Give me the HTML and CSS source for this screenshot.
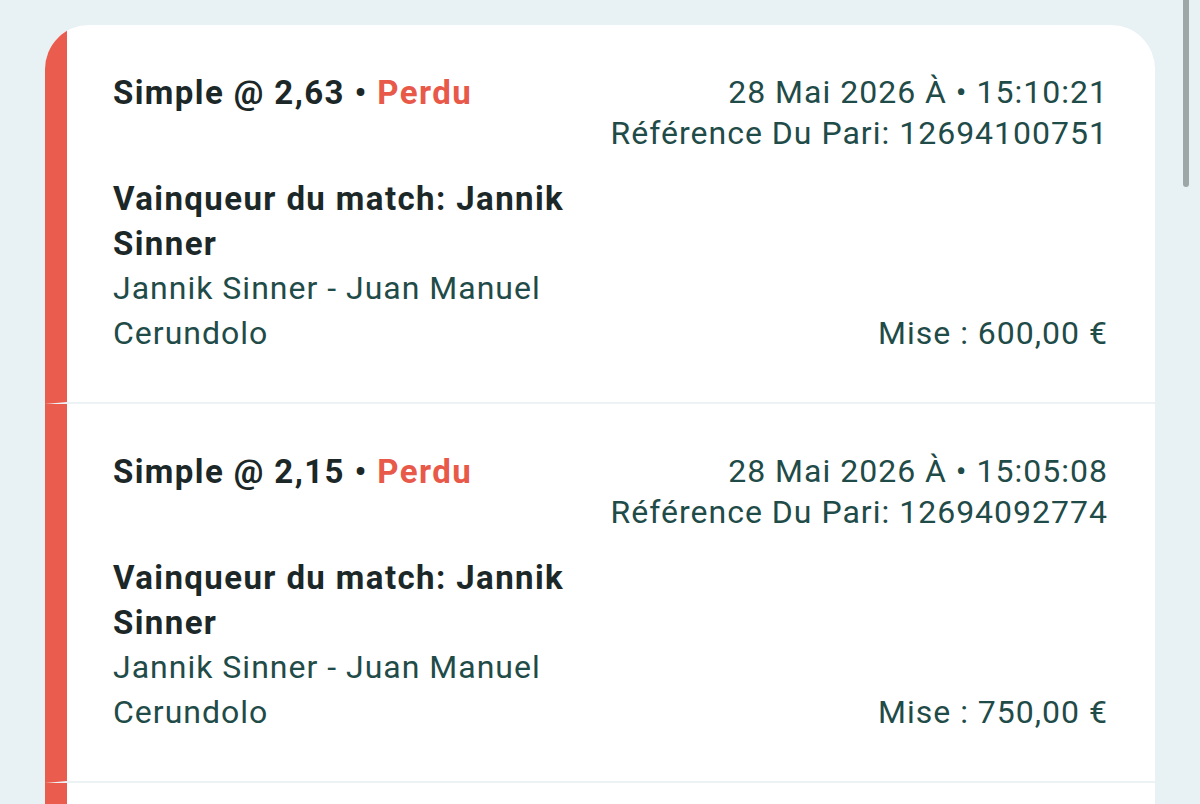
FILE: index.html
```
<!DOCTYPE html>
<html lang="fr">
<head>
    <meta charset="UTF-8">
    <meta name="viewport" content="width=device-width, initial-scale=1.0">
    <title>Mes paris</title>
    <link rel="stylesheet" href="styles.css">
</head>
<body>
    <div class="scrollbar"></div>

    <div class="bet-list">
        <div class="bet lost">
            <div class="bet-head">
                <div class="bet-title">Simple @ 2,63 &bull; <span class="status">Perdu</span></div>
                <div class="bet-meta">
                    <div>28 Mai 2026 À &bull; 15:10:21</div>
                    <div>Référence Du Pari: 12694100751</div>
                </div>
            </div>
            <div class="bet-body">
                <div class="selection">
                    <div class="market">Vainqueur du match: Jannik Sinner</div>
                    <div class="event">Jannik Sinner - Juan Manuel Cerundolo</div>
                </div>
                <div class="stake">Mise : 600,00 €</div>
            </div>
        </div>

        <div class="bet lost">
            <div class="bet-head">
                <div class="bet-title">Simple @ 2,15 &bull; <span class="status">Perdu</span></div>
                <div class="bet-meta">
                    <div>28 Mai 2026 À &bull; 15:05:08</div>
                    <div>Référence Du Pari: 12694092774</div>
                </div>
            </div>
            <div class="bet-body">
                <div class="selection">
                    <div class="market">Vainqueur du match: Jannik Sinner</div>
                    <div class="event">Jannik Sinner - Juan Manuel Cerundolo</div>
                </div>
                <div class="stake">Mise : 750,00 €</div>
            </div>
        </div>

        <!-- next bet, cut off by the screen -->
        <div class="bet lost"></div>
    </div>
</body>
</html>
```

FILE: styles.css
```
/* Page */
body {
    margin: 0;
    padding: 25px 0 0 45px;
    background: #e8f1f3;
    font-family: Roboto, "Noto Sans", Arial, sans-serif;
    font-size: 32px;
    letter-spacing: 1px;
    height: 804px;
    box-sizing: border-box;
    overflow: hidden;
}

/* Overlay scrollbar */
.scrollbar {
    position: fixed;
    top: 0;
    right: 11px;
    width: 6px;
    height: 187px;
    background: #9ca7a6;
    border-radius: 0 0 3px 3px;
}

/* Card */
.bet-list {
    width: 1110px;
    background: #ffffff;
    border-radius: 44px 44px 0 0;
    overflow: hidden;
}

.bet {
    height: 379px;
    padding: 47px 47px 0 46px;
    border-left: 22px solid #ea5c4d;
    border-bottom: 2px solid #edf3f4;
    box-sizing: border-box;
    color: #1f4b48;
}

.bet-head {
    display: flex;
    justify-content: space-between;
    line-height: 41px;
}

.bet-title {
    font-weight: bold;
    font-size: 33px;
    letter-spacing: 1.4px;
    color: #1c2828;
}

.status {
    color: #e8594a;
}

.bet-meta {
    text-align: right;
}

.bet-body {
    display: flex;
    justify-content: space-between;
    align-items: flex-end;
    margin-top: 22px;
    line-height: 45px;
}

.selection {
    width: 500px;
}

.market {
    font-weight: bold;
    font-size: 33px;
    letter-spacing: 1.4px;
    color: #1c2828;
}
```
